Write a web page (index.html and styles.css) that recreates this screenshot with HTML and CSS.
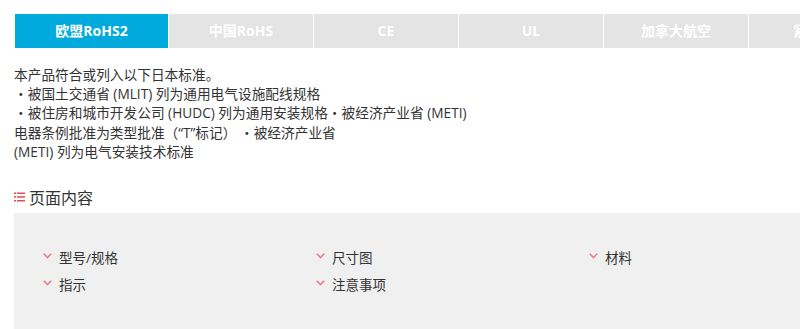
FILE: index.html
```html
<!DOCTYPE html>
<html lang="zh-CN">

<head>
    <meta charset="UTF-8">
    <meta name="viewport" content="width=device-width, initial-scale=1.0">
    <title>产品标准</title>
    <link rel="stylesheet" href="styles.css">
</head>

<body>
    <div class="page">
        <ul class="tabs">
            <li class="current">欧盟RoHS2</li>
            <li>中国RoHS</li>
            <li>CE</li>
            <li>UL</li>
            <li>加拿大航空</li>
            <li>紧固标准</li>
        </ul>

        <p class="intro">
            本产品符合或列入以下日本标准。<br>
            ・被国土交通省 (MLIT) 列为通用电气设施配线规格<br>
            ・被住房和城市开发公司 (HUDC) 列为通用安装规格・被经济产业省 (METI)<br>
            电器条例批准为类型批准（“T”标记） ・被经济产业省<br>
            (METI) 列为电气安装技术标准
        </p>

        <h3 class="title">
            <svg class="title-icon" width="11" height="10" viewBox="0 0 11 10">
                <rect x="0" y="0.5" width="2" height="1.5" fill="#e8474f"/>
                <rect x="3" y="0.5" width="8" height="1.5" fill="#e8474f"/>
                <rect x="0" y="4.2" width="2" height="1.5" fill="#e8474f"/>
                <rect x="3" y="4.2" width="8" height="1.5" fill="#e8474f"/>
                <rect x="0" y="8" width="2" height="1.5" fill="#e8474f"/>
                <rect x="3" y="8" width="8" height="1.5" fill="#e8474f"/>
            </svg>
            页面内容
        </h3>

        <div class="content-box">
            <ul class="links">
                <li><svg class="arrow" width="9" height="6" viewBox="0 0 9 6"><polyline points="0.8,0.8 4.5,4.6 8.2,0.8" fill="none" stroke="#ef7a86" stroke-width="1.5"/></svg>型号/规格</li>
                <li><svg class="arrow" width="9" height="6" viewBox="0 0 9 6"><polyline points="0.8,0.8 4.5,4.6 8.2,0.8" fill="none" stroke="#ef7a86" stroke-width="1.5"/></svg>尺寸图</li>
                <li><svg class="arrow" width="9" height="6" viewBox="0 0 9 6"><polyline points="0.8,0.8 4.5,4.6 8.2,0.8" fill="none" stroke="#ef7a86" stroke-width="1.5"/></svg>材料</li>
                <li><svg class="arrow" width="9" height="6" viewBox="0 0 9 6"><polyline points="0.8,0.8 4.5,4.6 8.2,0.8" fill="none" stroke="#ef7a86" stroke-width="1.5"/></svg>指示</li>
                <li><svg class="arrow" width="9" height="6" viewBox="0 0 9 6"><polyline points="0.8,0.8 4.5,4.6 8.2,0.8" fill="none" stroke="#ef7a86" stroke-width="1.5"/></svg>注意事项</li>
            </ul>
        </div>
    </div>
</body>

</html>
```

FILE: styles.css
```css
* {
    margin: 0;
    padding: 0;
}

body {
    font-family: "Open Sans", "Noto Sans CJK SC", sans-serif;
    color: #333333;
    background-color: #ffffff;
    overflow: hidden;
}

.page {
    width: 900px;
    padding: 14px 0 0 14px;
}

ul {
    list-style: none;
}

/* 标签栏 */
.tabs {
    display: flex;
    gap: 1px;
    margin-left: 1px;
}

.tabs>li {
    width: 144px;
    flex-shrink: 0;
    height: 34px;
    line-height: 34px;
    text-align: center;
    font-size: 14px;
    font-weight: bold;
    color: #ffffff;
    background-color: #e4e4e4;
}

.tabs>li.current {
    width: 153px;
    background-color: #00aadc;
}

/* 说明文字 */
.intro {
    margin-top: 17px;
    font-size: 13.7px;
    line-height: 19.2px;
    color: #333333;
}

/* 小标题 */
.title {
    margin-top: 24px;
    display: flex;
    align-items: center;
    height: 24px;
    font-size: 16px;
    font-weight: normal;
    color: #333333;
}

.title-icon {
    margin-right: 4px;
}

/* 灰色内容框 */
.content-box {
    margin-top: 4px;
    height: 140px;
    padding: 30px 0 0 29px;
    background-color: #f0f0f0;
}

.links {
    display: grid;
    grid-template-columns: repeat(3, 273px);
}

.links>li {
    display: flex;
    align-items: center;
    height: 27px;
    font-size: 13.5px;
    color: #333333;
}

.arrow {
    margin: -2px 7px 0 0;
}
```
